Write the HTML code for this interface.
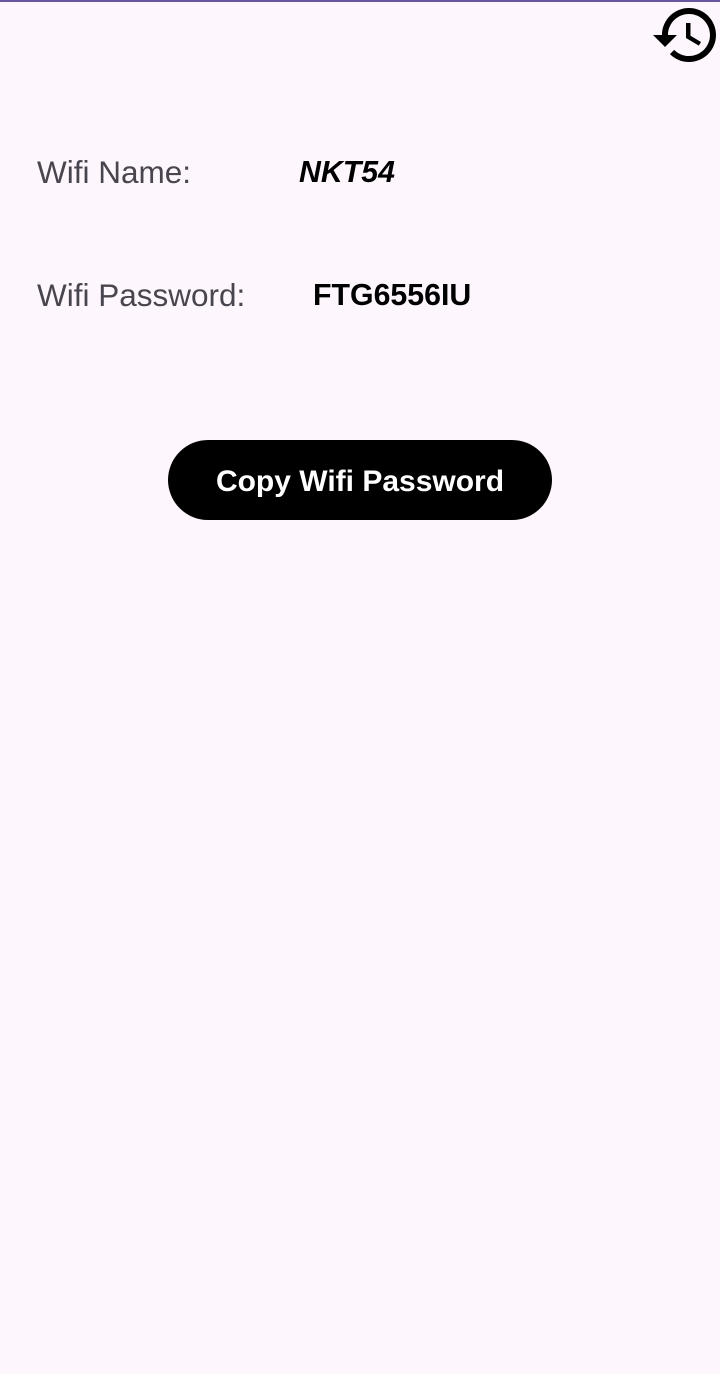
<!DOCTYPE html>
<html><head><meta charset="utf-8"><style>
html,body{margin:0;padding:0}
body{width:720px;height:1374px;background:#fdf7fd;position:relative;overflow:hidden;font-family:"Liberation Sans",sans-serif}
.top{position:absolute;left:0;top:0;width:720px;height:2px;background:#6a55a0}
.t{position:absolute;line-height:1;white-space:nowrap}
.l{color:#49454f;font-size:31.5px}
.v{color:#000;font-weight:bold;font-size:30.3px}
.btn{position:absolute;left:168px;top:440px;width:384px;height:80px;border-radius:40px;background:#000;color:#fff;font-weight:bold;font-size:30px;display:flex;align-items:center;justify-content:center;padding-top:3px;box-sizing:border-box}
</style></head><body>
<div class="top"></div>
<svg style="position:absolute;left:650px;top:-1px" width="72" height="72" viewBox="0 0 24 24"><path fill="#000" d="M13 3c-4.97 0-9 4.03-9 9H1l3.89 3.89.07.14L9 12H6c0-3.870 3.13-7 7-7s7 3.13 7 7-3.13 7-7 7c-1.93 0-3.68-.79-4.94-2.06l-1.42 1.42C8.27 19.99 10.51 21 13 21c4.97 0 9-4.03 9-9s-4.03-9-9-9zm-1 5v5l4.28 2.54.72-1.21-3.5-2.08V8H12z"/></svg>
<div class="t l" style="left:37px;top:157px">Wifi Name:</div>
<div class="t v" style="left:299px;top:158px;font-style:italic">NKT54</div>
<div class="t l" style="left:37px;top:280px">Wifi Password:</div>
<div class="t v" style="left:313px;top:281px">FTG6556IU</div>
<div class="btn">Copy Wifi Password</div>
</body></html>
